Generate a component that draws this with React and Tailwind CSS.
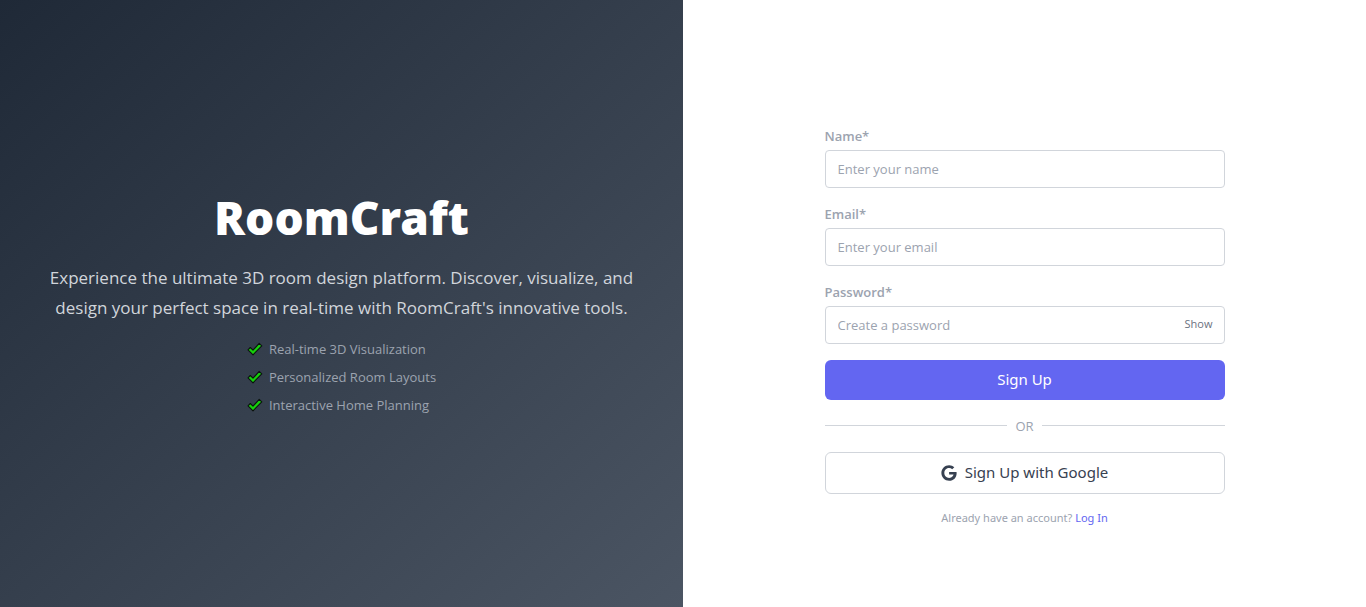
import { useState } from "react";
import { FaGoogle } from "react-icons/fa";

const features = [
  "Real-time 3D Visualization",
  "Personalized Room Layouts",
  "Interactive Home Planning",
];

const inputClass =
  "block h-[38px] w-full rounded border border-[#d1d5db] bg-white px-3 text-[13px] text-[#374151] placeholder:text-[#9ca3af] focus:border-[#6366f1] focus:outline-none";

function Check() {
  return (
    <svg className="h-3.5 w-4" viewBox="0 0 16 14" aria-hidden="true">
      <path
        d="M1 7.8 3.3 5.5 6 8.2 12.2 1.4 14.8 3.8 6 12.8Z"
        fill="#16d00c"
        stroke="#0b120e"
        strokeWidth="1.1"
        strokeLinejoin="round"
      />
    </svg>
  );
}

function Field({ id, label, children, ...props }) {
  return (
    <div>
      <label htmlFor={id} className="mb-1 block text-[13px] leading-5 font-semibold text-[#9ca3af]">
        {label}
      </label>
      <div className="relative">
        <input id={id} className={inputClass} {...props} />
        {children}
      </div>
    </div>
  );
}

export default function App() {
  const [visible, setVisible] = useState(false);

  return (
    <div className="flex min-h-screen bg-white font-['Segoe_UI','Open_Sans',sans-serif]">
      <section className="flex w-1/2 flex-col items-center justify-center bg-[linear-gradient(to_bottom_right,#1f2937,#4b5563)] px-12 text-center">
        <h1 className="mb-[22px] font-['Segoe_UI','Noto_Sans',sans-serif] text-[46px] leading-12 font-black text-white">
          RoomCraft
        </h1>
        <p className="mb-4 text-[17px] leading-[30px] text-[#d1d5db]">
          Experience the ultimate 3D room design platform. Discover, visualize, and design your
          perfect space in real-time with RoomCraft's innovative tools.
        </p>
        <ul className="space-y-2 text-left text-[13px] leading-5 text-[#9ca3af]">
          {features.map((feature) => (
            <li key={feature} className="flex items-center gap-1.5">
              <Check />
              {feature}
            </li>
          ))}
        </ul>
      </section>

      <main className="flex w-1/2 flex-col items-center justify-center px-8 pt-11">
        <form className="flex w-full max-w-[400px] flex-col gap-4" onSubmit={(e) => e.preventDefault()}>
          <Field id="name" label="Name*" type="text" placeholder="Enter your name" />
          <Field id="email" label="Email*" type="email" placeholder="Enter your email" />
          <Field
            id="password"
            label="Password*"
            type={visible ? "text" : "password"}
            placeholder="Create a password"
          >
            <button
              type="button"
              onClick={() => setVisible(!visible)}
              className="absolute inset-y-0 right-3 text-[11px] text-[#6b7280]"
            >
              {visible ? "Hide" : "Show"}
            </button>
          </Field>
          <button
            type="submit"
            className="h-10 rounded-md bg-[#6366f1] font-['Segoe_UI','Noto_Sans',sans-serif] text-[15px] text-white"
          >
            Sign Up
          </button>
          <div className="flex items-center gap-2 text-[13px] leading-5 text-[#9ca3af]">
            <span className="h-px flex-1 bg-[#d1d5db]" />
            OR
            <span className="h-px flex-1 bg-[#d1d5db]" />
          </div>
          <button
            type="button"
            className="flex h-[42px] items-center justify-center gap-2 rounded-md border border-[#d1d5db] font-['Segoe_UI','Noto_Sans',sans-serif] text-[15px] text-[#374151]"
          >
            <FaGoogle className="size-4" />
            Sign Up with Google
          </button>
          <p className="text-center font-['Segoe_UI','Noto_Sans',sans-serif] text-[11px] leading-4 text-[#9ca3af]">
            Already have an account?{" "}
            <a href="#login" className="text-[#6366f1]">
              Log In
            </a>
          </p>
        </form>
      </main>
    </div>
  );
}
